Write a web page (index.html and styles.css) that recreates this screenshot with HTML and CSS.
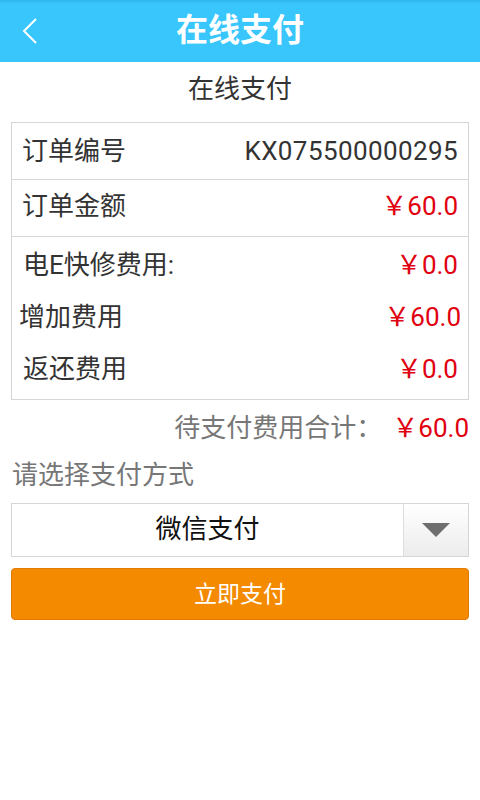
FILE: index.html
```html
<!DOCTYPE html>
<html lang="zh-CN">
<head>
    <meta charset="UTF-8">
    <meta name="viewport" content="width=device-width, initial-scale=1.0">
    <title>在线支付</title>
    <link rel="stylesheet" href="styles.css">
</head>
<body>
<div class="top-bar">
    <span class="back">
        <svg width="16" height="28" viewBox="0 0 16 28">
            <polyline points="14,2 2,14 14,26" fill="none" stroke="#fff" stroke-width="2"/>
        </svg>
    </span>
    <h1>在线支付</h1>
</div>

<div class="sub-title">在线支付</div>

<div class="order-box">
    <div class="row">
        <span>订单编号</span>
        <span class="order-no">KX075500000295</span>
    </div>
    <div class="row row-amount">
        <span>订单金额</span>
        <span class="red">￥60.0</span>
    </div>
    <div class="fees">
        <div class="fee">
            <span>电E快修费用:</span>
            <span class="red">￥0.0</span>
        </div>
        <div class="fee fee-wide">
            <span>增加费用</span>
            <span class="red">￥60.0</span>
        </div>
        <div class="fee">
            <span>返还费用</span>
            <span class="red">￥0.0</span>
        </div>
    </div>
</div>

<div class="total">
    <span>待支付费用合计：</span>
    <span class="red total-sum">￥60.0</span>
</div>

<div class="pay-tip">请选择支付方式</div>

<div class="pay-select">
    <div class="pay-name">微信支付</div>
    <div class="pay-arrow"><span class="triangle"></span></div>
</div>

<button class="pay-btn">立即支付</button>
</body>
</html>
```

FILE: styles.css
```css
body {
    margin: 0;
    background: #fff;
    font-family: "Roboto", "Noto Sans CJK SC", sans-serif;
    font-size: 26px;
    line-height: 30px;
    color: #333;
}

.top-bar {
    height: 62px;
    background: linear-gradient(#2fb6ec 0, #38c6fd 4px);
    display: flex;
    align-items: center;
    justify-content: center;
    position: relative;
}

.top-bar h1 {
    margin: 0 0 2px;
    color: #fff;
    font-size: 32px;
    line-height: 36px;
    font-weight: bold;
}

.back {
    position: absolute;
    left: 22px;
    top: 17px;
}

.sub-title {
    height: 54px;
    padding-bottom: 6px;
    display: flex;
    align-items: center;
    justify-content: center;
}

.order-box {
    margin: 0 11px;
    border: 1px solid #d6d6d6;
}

.row {
    height: 56px;
    padding: 0 10px;
    display: flex;
    align-items: center;
    justify-content: space-between;
    border-bottom: 1px solid #d6d6d6;
}

.row-amount {
    height: 51px;
    padding-bottom: 5px;
}

.order-no {
    letter-spacing: 0.4px;
}

.fees {
    padding: 2px 0 4px;
}

.fee {
    height: 52px;
    padding: 0 10px 0 11px;
    display: flex;
    align-items: center;
    justify-content: space-between;
}

.fee-wide {
    padding: 0 7px;
}

.red {
    color: #e00010;
}

.total {
    height: 48px;
    padding: 4px 11px 0 0;
    display: flex;
    align-items: center;
    justify-content: flex-end;
    color: #777;
}

.total-sum {
    margin-left: 10px;
}

.pay-tip {
    height: 46px;
    padding: 0 0 5px 12px;
    display: flex;
    align-items: center;
    color: #777;
}

.pay-select {
    margin: 0 11px;
    height: 52px;
    border: 1px solid #d6d6d6;
    display: flex;
}

.pay-name {
    flex: 1;
    display: flex;
    align-items: center;
    justify-content: center;
    padding-bottom: 3px;
    color: #111;
}

.pay-arrow {
    width: 64px;
    border-left: 1px solid #dedede;
    background: linear-gradient(#fff, #ececec);
    display: flex;
    align-items: center;
    justify-content: center;
}

.triangle {
    width: 0;
    height: 0;
    border-left: 14px solid transparent;
    border-right: 14px solid transparent;
    border-top: 14px solid #6e6e6e;
}

.pay-btn {
    display: block;
    margin: 11px 11px 0;
    width: 458px;
    height: 52px;
    padding: 2px 0 0;
    border: 1px solid #e07a00;
    border-radius: 4px;
    background: #f38a00;
    color: #fff;
    font-family: "Roboto", "Noto Sans CJK SC", sans-serif;
    font-size: 23px;
    line-height: 30px;
}
```
